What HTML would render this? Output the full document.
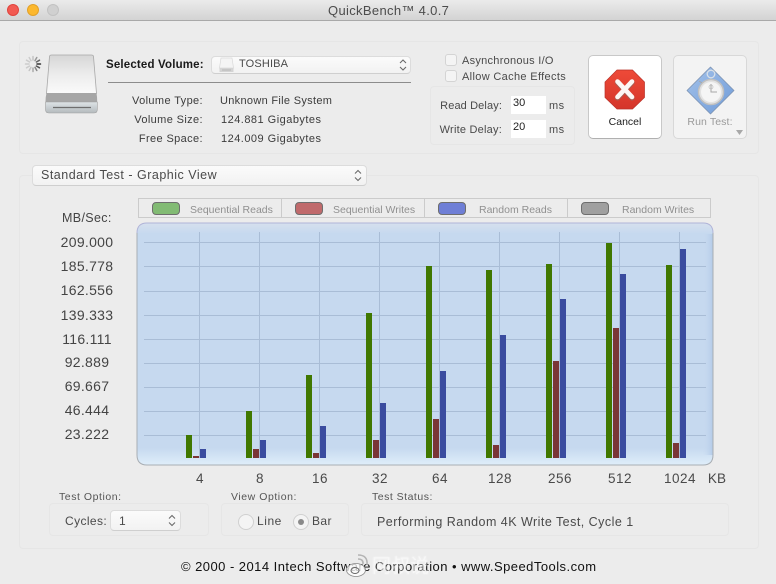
<!DOCTYPE html>
<html><head><meta charset="utf-8">
<style>
html,body{margin:0;padding:0;width:776px;height:584px;overflow:hidden;background:#ececec}
body{position:relative;font-family:"Liberation Sans",Arial,sans-serif;color:#3c3c3c}
.t{position:absolute;white-space:nowrap;line-height:14px}
.a{position:absolute;box-sizing:border-box}
.box{position:absolute;box-sizing:border-box;border:1px solid #e6e6e6;border-radius:4px}
.pop{position:absolute;box-sizing:border-box;background:linear-gradient(#fbfbfb,#f2f2f2);border:1px solid #dcdcdc;border-bottom-color:#cfcfcf;border-radius:4px}
.r{text-align:right}
.y{font-size:14px;letter-spacing:.3px;color:#444;left:58px;width:56px;text-align:center}
.x{font-size:13.5px;letter-spacing:.5px;color:#4a4a4a;top:472px;width:50px;text-align:center}
.lg{font-size:10.5px;letter-spacing:0;color:#909090;top:203px}
.sw{position:absolute;top:202px;width:28px;height:13px;border-radius:4px;box-sizing:border-box;border:1px solid #6e6e6e}
</style></head><body>

<div class="a" style="left:0;top:0;width:776px;height:21px;background:linear-gradient(#ebebeb,#d3d3d3);border-bottom:1px solid #a9a9a9"></div>
<div class="a" style="left:7px;top:4px;width:12px;height:12px;border-radius:50%;background:#f25a52;border:1px solid #e0443e"></div>
<div class="a" style="left:27px;top:4px;width:12px;height:12px;border-radius:50%;background:#fcb82e;border:1px solid #e2a12a"></div>
<div class="a" style="left:47px;top:4px;width:12px;height:12px;border-radius:50%;background:#d0d0d0;border:1px solid #c2c2c2"></div>
<div class="t" style="left:328px;top:4px;font-size:13px;letter-spacing:.33px;color:#4c4c4c">QuickBench™ 4.0.7</div>

<div class="box" style="left:19px;top:41px;width:740px;height:113px"></div>
<div class="box" style="left:19px;top:175px;width:740px;height:374px"></div>

<svg class="a" style="left:24px;top:55px" width="18" height="18" viewBox="0 0 18 18">
<g stroke-width="1.5" stroke-linecap="round">
<path d="M9 1.500V5" stroke="#c4c4c4"/><path d="M12.800 2.500L11 5.600" stroke="#9a9a9a"/><path d="M15.500 5.200L12.400 7" stroke="#666"/><path d="M16.500 9H13" stroke="#333"/><path d="M15.500 12.800L12.400 11" stroke="#555"/><path d="M12.800 15.500L11 12.400" stroke="#888"/><path d="M9 16.500V13" stroke="#aaa"/><path d="M5.200 15.500L7 12.400" stroke="#c4c4c4"/><path d="M2.500 12.800L5.600 11" stroke="#ccc"/><path d="M1.500 9H5" stroke="#ccc"/><path d="M2.500 5.200L5.600 7" stroke="#ccc"/><path d="M5.200 2.500L7 5.600" stroke="#ccc"/>
</g></svg>

<svg class="a" style="left:44px;top:54px" width="56" height="60" viewBox="0 0 56 60">
<defs>
<linearGradient id="d1" x1="0" y1="0" x2="0" y2="1"><stop offset="0" stop-color="#d6d6d6"/><stop offset=".5" stop-color="#ececec"/><stop offset="1" stop-color="#fafafa"/></linearGradient>
<linearGradient id="d2" x1="0" y1="0" x2="0" y2="1"><stop offset="0" stop-color="#dde3e6"/><stop offset="1" stop-color="#b4babd"/></linearGradient>
</defs>
<path d="M5.500 2.500Q5.700 1 7.500 1H47.500Q49.300 1 49.500 2.500L52.500 39.500H2.500Z" fill="url(#d1)" stroke="#a8a8a8" stroke-width=".8"/>
<path d="M2.500 39H52.500Q53.200 43 53.200 48H1.500Q1.500 43 2.500 39Z" fill="#a6a6a6"/>
<path d="M1.500 48H53.300V55.500Q53.300 59 50 59H5Q1.500 59 1.500 55.500Z" fill="url(#d2)" stroke="#a0a0a0" stroke-width=".6"/>
<path d="M9 53.500H47" stroke="#6e6e6e" stroke-width="1.300"/>
</svg>

<div class="t" style="left:106px;top:58px;font-size:11.500px;font-weight:bold;letter-spacing:.17px;color:#1a1a1a">Selected Volume:</div>
<div class="pop" style="left:211px;top:56px;width:200px;height:18px"></div>
<svg class="a" style="left:218px;top:57px" width="18" height="16" viewBox="0 0 18 16"><path d="M3 1H14L15.500 11H1.500Z" fill="#f4f4f4" stroke="#d8d8d8" stroke-width=".7"/><path d="M1.500 11H15.500V15H1.500Z" fill="#d4d4d4"/><path d="M4 13H13" stroke="#aaa" stroke-width=".7"/></svg>
<div class="t" style="left:239px;top:57px;font-size:11px;letter-spacing:.15px;color:#4a4a4a">TOSHIBA</div>
<svg class="a" style="left:398px;top:58px" width="10" height="14" viewBox="0 0 10 14"><path d="M2 5L5 2L8 5M2 9L5 12L8 9" fill="none" stroke="#6a6a6a" stroke-width="1.100"/></svg>
<div class="a" style="left:108px;top:82px;width:303px;height:1px;background:#8c8c8c"></div>

<div class="t r" style="left:100px;width:103px;top:94px;font-size:11px;letter-spacing:.38px">Volume Type:</div>
<div class="t r" style="left:100px;width:103px;top:113px;font-size:11px;letter-spacing:.38px">Volume Size:</div>
<div class="t r" style="left:100px;width:103px;top:132px;font-size:11px;letter-spacing:.38px">Free Space:</div>
<div class="t" style="left:220px;top:94px;font-size:11px;letter-spacing:.31px">Unknown File System</div>
<div class="t" style="left:221px;top:113px;font-size:11px;letter-spacing:.48px">124.881 Gigabytes</div>
<div class="t" style="left:221px;top:132px;font-size:11px;letter-spacing:.48px">124.009 Gigabytes</div>

<div class="a" style="left:445px;top:54px;width:12px;height:12px;border:1px solid #d4d4d4;border-radius:3px;background:#f4f4f4"></div>
<div class="a" style="left:445px;top:70px;width:12px;height:12px;border:1px solid #d4d4d4;border-radius:3px;background:#f4f4f4"></div>
<div class="t" style="left:462px;top:54px;font-size:11px;letter-spacing:.27px;color:#4a4a4a">Asynchronous I/O</div>
<div class="t" style="left:462px;top:70px;font-size:11px;letter-spacing:.34px;color:#4a4a4a">Allow Cache Effects</div>

<div class="box" style="left:430px;top:86px;width:145px;height:59px"></div>
<div class="t r" style="left:430px;width:72px;top:99px;font-size:11px;letter-spacing:.12px;color:#4a4a4a">Read Delay:</div>
<div class="t r" style="left:430px;width:72px;top:123px;font-size:11px;letter-spacing:.22px;color:#4a4a4a">Write Delay:</div>
<div class="a" style="left:511px;top:96px;width:35px;height:18px;background:#fff"></div>
<div class="a" style="left:511px;top:120px;width:35px;height:18px;background:#fff"></div>
<div class="t" style="left:513px;top:96px;font-size:11px;color:#222">30</div>
<div class="t" style="left:513px;top:120px;font-size:11px;color:#222">20</div>
<div class="t" style="left:549px;top:99px;font-size:11px;letter-spacing:.4px;color:#4a4a4a">ms</div>
<div class="t" style="left:549px;top:123px;font-size:11px;letter-spacing:.4px;color:#4a4a4a">ms</div>

<div class="a" style="left:588px;top:55px;width:74px;height:84px;background:#fff;border:1px solid #c8c8c8;border-bottom-color:#b0b0b0;border-radius:5px"></div>
<svg class="a" style="left:604px;top:69px" width="42" height="42" viewBox="0 0 42 42">
<defs><linearGradient id="rd" x1="0" y1="0" x2="0" y2="1"><stop offset="0" stop-color="#ee4a38"/><stop offset="1" stop-color="#d4352a"/></linearGradient></defs>
<path d="M13 1H28.500L40.500 13V28.500L28.500 40H13L1 28.500V13Z" fill="url(#rd)" stroke="#b9322a" stroke-width=".7"/>
<path d="M13.500 12.500L28 28M28 12.500L13.500 28" stroke="#a85c52" stroke-width="5.500" stroke-linecap="round" transform="translate(0,.9)"/>
<path d="M13.500 12.500L28 28M28 12.500L13.500 28" stroke="#fdf6f4" stroke-width="4.600" stroke-linecap="round"/>
</svg>
<div class="t" style="left:589px;top:115px;width:72px;text-align:center;font-size:10.500px;letter-spacing:0;color:#1c1c1c">Cancel</div>

<div class="a" style="left:673px;top:55px;width:74px;height:84px;background:#f3f3f3;border:1px solid #d8d8d8;border-radius:5px"></div>
<svg class="a" style="left:686px;top:66px" width="50" height="50" viewBox="0 0 50 50">
<defs><linearGradient id="bl" x1="0" y1="0" x2="1" y2="1"><stop offset="0" stop-color="#a4c2ea"/><stop offset="1" stop-color="#6f9bd8"/></linearGradient></defs>
<path d="M24.500 1L48 24.500L24.500 48L1 24.500Z" fill="url(#bl)" stroke="#7d93b2" stroke-width=".8" stroke-linejoin="round"/>
<circle cx="25" cy="8" r="3.800" fill="none" stroke="#d8e0e8" stroke-width="1.300"/>
<circle cx="25" cy="26" r="12.500" fill="#e2e2e2" stroke="#c0c0c0" stroke-width="1.500"/>
<circle cx="25" cy="26" r="10" fill="#f5f5f5"/>
<path d="M25 18V26L31 26M13 15L16 17" stroke="#a8a8a8" stroke-width="1" fill="none"/>
<circle cx="25" cy="21" r="2" fill="none" stroke="#bbb" stroke-width=".7"/>
</svg>
<div class="t" style="left:674px;top:115px;width:72px;text-align:center;font-size:10.500px;letter-spacing:.12px;color:#9a9a9a">Run Test:</div>
<svg class="a" style="left:735px;top:129px" width="10" height="7"><path d="M1 1H8L4.500 6Z" fill="#a8a8a8"/></svg>

<div class="pop" style="left:32px;top:165px;width:335px;height:21px"></div>
<div class="t" style="left:41px;top:168px;font-size:12.500px;letter-spacing:.5px;color:#4a4a4a">Standard Test - Graphic View</div>
<svg class="a" style="left:353px;top:168px" width="10" height="15" viewBox="0 0 10 15"><path d="M2 5.500L5 2.500L8 5.500M2 9.500L5 12.500L8 9.500" fill="none" stroke="#6a6a6a" stroke-width="1.100"/></svg>

<div class="a" style="left:138px;top:198px;width:573px;height:20px;border:1px solid #cbcbcb"></div>
<div class="a" style="left:281px;top:198px;width:1px;height:20px;background:#cbcbcb"></div>
<div class="a" style="left:424px;top:198px;width:1px;height:20px;background:#cbcbcb"></div>
<div class="a" style="left:567px;top:198px;width:1px;height:20px;background:#cbcbcb"></div>
<div class="sw" style="left:152px;background:#82bb74"></div>
<div class="sw" style="left:295px;background:#c06a6c"></div>
<div class="sw" style="left:438px;background:#6f7fd6"></div>
<div class="sw" style="left:581px;background:#a0a0a0"></div>
<div class="t lg" style="left:190px">Sequential Reads</div>
<div class="t lg" style="left:333px">Sequential Writes</div>
<div class="t lg" style="left:479px">Random Reads</div>
<div class="t lg" style="left:622px">Random Writes</div>

<div class="t" style="left:62px;top:211px;font-size:12.500px;letter-spacing:.35px;color:#444">MB/Sec:</div>
<div class="t y" style="top:235px;left:59px">209.000</div>
<div class="t y" style="top:259px;left:59px">185.778</div>
<div class="t y" style="top:283px;left:59px">162.556</div>
<div class="t y" style="top:308px;left:59px">139.333</div>
<div class="t y" style="top:332px;left:59px">116.111</div>
<div class="t y" style="top:355px;left:59px">92.889</div>
<div class="t y" style="top:379px;left:59px">69.667</div>
<div class="t y" style="top:403px;left:59px">46.444</div>
<div class="t y" style="top:427px;left:59px">23.222</div>

<svg class="a" style="left:136px;top:222px" width="579" height="245" viewBox="0 0 579 245">
<defs>
<linearGradient id="cb" x1="0" y1="0" x2="0" y2="1"><stop offset="0" stop-color="#d6e0ee"/><stop offset=".045" stop-color="#c6d9ef"/><stop offset=".93" stop-color="#c6d9ef"/><stop offset="1" stop-color="#dfeefa"/></linearGradient>
<linearGradient id="cr" x1="0" y1="0" x2="1" y2="0"><stop offset="0" stop-color="#c6d9ef" stop-opacity="0"/><stop offset="1" stop-color="#b2cae8"/></linearGradient>
</defs>
<rect x="1" y="1" width="576" height="242" rx="10" fill="url(#cb)"/>
<rect x="567" y="12" width="10" height="221" fill="url(#cr)"/>
<path d="M1 11Q1 1 11 1H567Q577 1 577 11" fill="none" stroke="#b0b4d8" stroke-width="1"/>
<path d="M1 11V233Q1 243 11 243H567Q577 243 577 233V11" fill="none" stroke="#a8aeb4" stroke-width="1"/>
<g stroke="#a9bdd6" stroke-width="1">
<path d="M8 20.500H570M8 44.500H570M8 69.500H570M8 93.500H570M8 117.500H570M8 141.500H570M8 165.500H570M8 189.500H570M8 213.500H570"/>
<path d="M63.500 10V236M123.500 10V236M183.500 10V236M243.500 10V236M303.500 10V236M363.500 10V236M423.500 10V236M483.500 10V236M543.500 10V236"/>
</g>
<g fill="#407800">
<rect x="50" y="213" width="6" height="23"/><rect x="110" y="189" width="6" height="47"/><rect x="170" y="153" width="6" height="83"/><rect x="230" y="91" width="6" height="145"/><rect x="290" y="44" width="6" height="192"/><rect x="350" y="48" width="6" height="188"/><rect x="410" y="42" width="6" height="194"/><rect x="470" y="21" width="6" height="215"/><rect x="530" y="43" width="6" height="193"/>
</g>
<g fill="#7a3636">
<rect x="57" y="234" width="6" height="2"/><rect x="117" y="227" width="6" height="9"/><rect x="177" y="231" width="6" height="5"/><rect x="237" y="218" width="6" height="18"/><rect x="297" y="197" width="6" height="39"/><rect x="357" y="223" width="6" height="13"/><rect x="417" y="139" width="6" height="97"/><rect x="477" y="106" width="6" height="130"/><rect x="537" y="221" width="6" height="15"/>
</g>
<g fill="#3a4c9f">
<rect x="64" y="227" width="6" height="9"/><rect x="124" y="218" width="6" height="18"/><rect x="184" y="204" width="6" height="32"/><rect x="244" y="181" width="6" height="55"/><rect x="304" y="149" width="6" height="87"/><rect x="364" y="113" width="6" height="123"/><rect x="424" y="77" width="6" height="159"/><rect x="484" y="52" width="6" height="184"/><rect x="544" y="27" width="6" height="209"/>
</g>
</svg>

<div class="t x" style="left:175px">4</div>
<div class="t x" style="left:235px">8</div>
<div class="t x" style="left:295px">16</div>
<div class="t x" style="left:355px">32</div>
<div class="t x" style="left:415px">64</div>
<div class="t x" style="left:475px">128</div>
<div class="t x" style="left:535px">256</div>
<div class="t x" style="left:595px">512</div>
<div class="t x" style="left:655px">1024</div>
<div class="t x" style="left:692px;letter-spacing:.1px">KB</div>

<div class="t" style="left:59px;top:490px;font-size:10.500px;letter-spacing:.55px;color:#555">Test Option:</div>
<div class="t" style="left:231px;top:490px;font-size:10.500px;letter-spacing:.55px;color:#555">View Option:</div>
<div class="t" style="left:372px;top:490px;font-size:10.500px;letter-spacing:.5px;color:#555">Test Status:</div>
<div class="box" style="left:49px;top:503px;width:160px;height:33px"></div>
<div class="box" style="left:221px;top:503px;width:128px;height:33px"></div>
<div class="box" style="left:361px;top:503px;width:368px;height:33px"></div>

<div class="t" style="left:65px;top:514px;font-size:12px;letter-spacing:.4px;color:#4a4a4a">Cycles:</div>
<div class="pop" style="left:110px;top:510px;width:71px;height:21px"></div>
<div class="t" style="left:119px;top:514px;font-size:12px;color:#4a4a4a">1</div>
<svg class="a" style="left:167px;top:513px" width="10" height="15" viewBox="0 0 10 15"><path d="M2 5.500L5 2.500L8 5.500M2 9.500L5 12.500L8 9.500" fill="none" stroke="#6a6a6a" stroke-width="1.100"/></svg>

<div class="a" style="left:238px;top:514px;width:16px;height:16px;border-radius:50%;background:#f4f4f4;border:1px solid #d0d0d0"></div>
<div class="t" style="left:257px;top:514px;font-size:12px;letter-spacing:.55px;color:#4a4a4a">Line</div>
<div class="a" style="left:293px;top:514px;width:16px;height:16px;border-radius:50%;background:#f4f4f4;border:1px solid #d0d0d0"></div>
<div class="a" style="left:298px;top:519px;width:6px;height:6px;border-radius:50%;background:#8a8a8a"></div>
<div class="t" style="left:312px;top:514px;font-size:12px;letter-spacing:.4px;color:#4a4a4a">Bar</div>

<div class="t" style="left:377px;top:515px;font-size:12.500px;letter-spacing:.47px;color:#4a4a4a">Performing Random 4K Write Test, Cycle 1</div>

<div class="t" style="left:181px;top:560px;font-size:13px;letter-spacing:.46px;color:#111">© 2000 - 2014 Intech Software Corporation • www.SpeedTools.com</div>

<svg class="a" style="left:344px;top:552px" width="28" height="26" viewBox="0 0 28 26">
<ellipse cx="12" cy="18" rx="9.500" ry="6.500" fill="#fff" fill-opacity=".75" stroke="#888" stroke-width=".8"/>
<ellipse cx="11" cy="18.500" rx="4" ry="3" fill="none" stroke="#666" stroke-width="1"/>
<path d="M14 3Q24 3 23 13M14 7Q19.500 7 19 12" fill="none" stroke="#b4b4b4" stroke-width="1.600"/>
</svg>
<div class="t" style="left:372px;top:556px;font-size:19px;line-height:21px;color:#fff;opacity:.6;text-shadow:0 0 2px #fff;font-family:'Liberation Sans','Noto Sans CJK SC',sans-serif">网叔说</div>
</body></html>
